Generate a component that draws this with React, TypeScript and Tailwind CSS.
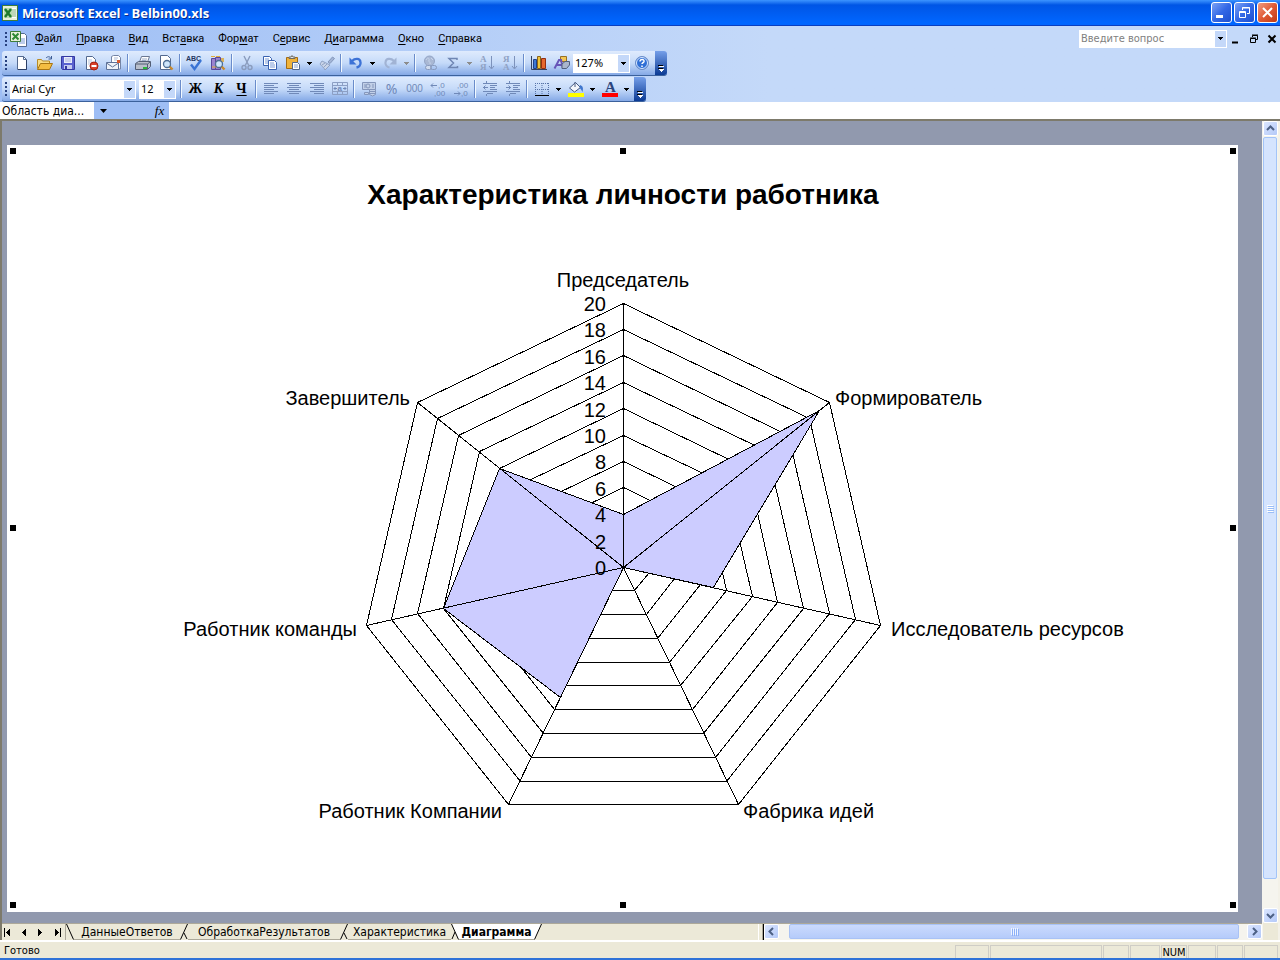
import type { ReactNode } from "react";

const menus = [
  ["", "Ф", "айл"],
  ["", "П", "равка"],
  ["", "В", "ид"],
  ["Вст", "а", "вка"],
  ["Фор", "м", "ат"],
  ["С", "е", "рвис"],
  ["Д", "и", "аграмма"],
  ["", "О", "кно"],
  ["", "С", "правка"],
];

const axes = [
  { name: "Председатель", value: 4, x: 616, y: 142, anchor: "middle" },
  { name: "Формирователь", value: 19, x: 828, y: 260, anchor: "start" },
  { name: "Исследователь ресурсов", value: 7, x: 884, y: 491, anchor: "start" },
  { name: "Фабрика идей", value: 0, x: 736, y: 673, anchor: "start" },
  { name: "Работник Компании", value: 11, x: 495, y: 673, anchor: "end" },
  { name: "Работник команды", value: 14, x: 350, y: 491, anchor: "end" },
  { name: "Завершитель", value: 12, x: 403, y: 260, anchor: "end" },
] as const;

const CX = 616;
const CY = 422;
const RADIUS = 264;
const MAX = 20;
const ticks = [0, 2, 4, 6, 8, 10, 12, 14, 16, 18, 20];

function point(index: number, value: number) {
  const angle = (index * 2 * Math.PI) / axes.length;
  const r = (value / MAX) * RADIUS;
  const x = Math.round(CX + r * Math.sin(angle));
  const y = Math.floor(CY - r * Math.cos(angle));
  return [x + 0.5, y + 0.5];
}

function polygon(values: number[]) {
  return values.map((v, i) => point(i, v).join(",")).join(" ");
}

function RadarChart() {
  const handles = [
    [3, 3], [613, 3], [1223, 3],
    [3, 380], [1223, 380],
    [3, 757], [613, 757], [1223, 757],
  ];

  return (
    <svg viewBox="0 0 1231 767" className="block h-full w-full font-['Liberation_Sans',Arial,sans-serif]">
      <text x="616" y="59" textAnchor="middle" className="text-[28px] font-bold">
        Характеристика личности работника
      </text>
      <g fill="none" stroke="#000" shapeRendering="crispEdges">
        {ticks.slice(1).map((t) => (
          <polygon key={t} points={polygon(axes.map(() => t))} />
        ))}
        <polygon points={polygon(axes.map((a) => a.value))} fill="#ccccff" />
        {axes.map((a, i) => {
          const [x, y] = point(i, MAX);
          return <line key={a.name} x1={CX + 0.5} y1={CY + 0.5} x2={x} y2={y} />;
        })}
      </g>
      <g className="text-[20px]">
        {axes.map((a) => (
          <text key={a.name} x={a.x} y={a.y} textAnchor={a.anchor}>
            {a.name}
          </text>
        ))}
        {ticks.map((t) => (
          <text key={t} x="599" y={Math.round(CY - (t / MAX) * RADIUS) + 8} textAnchor="end">
            {t}
          </text>
        ))}
      </g>
      {handles.map(([x, y]) => (
        <rect key={`${x}-${y}`} x={x} y={y} width="6" height="6" />
      ))}
    </svg>
  );
}

function Icon({ children }: { children: ReactNode }) {
  return (
    <svg viewBox="0 0 16 16" className="h-4 w-4 overflow-visible" fill="none">
      {children}
    </svg>
  );
}

const excelLogo = (
  <>
    <rect x="0.5" y="0.5" width="15" height="15" fill="#e8f0dc" stroke="#3f7d3a" />
    <path d="M9 3h5v10H9z" fill="#fff" />
    <path d="M10 5h4M10 7h4M10 9h4M10 11h4" stroke="#7fae75" />
    <path d="M2 3h8v10H2z" fill="#b9dcae" />
    <path d="M3 4l6 8M9 4l-6 8" stroke="#1f7a2b" strokeWidth="2.4" />
  </>
);

const magnifier = (
  <>
    <path d="M11.5 11.5l3 3" stroke="#c98a2c" strokeWidth="2.4" />
    <circle cx="9" cy="9" r="3.5" fill="#cfe6fb" stroke="#4f6f95" strokeWidth="1.3" />
  </>
);

const page = <path d="M3.5 1.5h6l3 3v10h-9z" fill="#fff" stroke="#53698f" />;

const icons: Record<string, ReactNode> = {
  new: (
    <>
      {page}
      <path d="M9.5 1.5v3h3" stroke="#53698f" />
      <path d="M12.5 5v9.5H4" stroke="#2c3f66" />
    </>
  ),
  open: (
    <>
      <path d="M9 3c2-2 4-1.500 5 0.500M14.500 1v3h-3" stroke="#3c5c94" />
      <path d="M0.5 13.5v-9h4l1 1.500h7v3" fill="#f7dc86" stroke="#b88a25" />
      <path d="M0.500 14.500l3-6h12l-3 6z" fill="#f3bd42" stroke="#a87512" />
    </>
  ),
  save: (
    <>
      <path d="M1.5 1.500h13v13h-12l-1-1z" fill="#5a62cf" stroke="#3438a0" />
      <path d="M4 2h8v6H4z" fill="#e9edfb" />
      <path d="M5 4h6M5 6h6" stroke="#a9b2de" />
      <path d="M4 10h8v4H4z" fill="#c7cdf0" />
      <path d="M5 11h2v3H5z" fill="#3438a0" />
    </>
  ),
  permission: (
    <>
      {page}
      <path d="M5 5h4M5 7h5M5 9h3" stroke="#b5c3dc" />
      <circle cx="11" cy="11" r="4" fill="#d9412b" stroke="#a5200f" />
      <path d="M8.500 11h5" stroke="#fff" strokeWidth="2" />
    </>
  ),
  mail: (
    <>
      <path d="M5.500 7V1.500l2-1h5l2 2V14h-9z" fill="#fff" stroke="#7484a5" />
      <path d="M8 3h4M8 5h3" stroke="#aebbd4" />
      <path d="M0.500 7.500h12v7H0.500z" fill="#eef2f9" stroke="#5e7298" />
      <path d="M0.500 8l6 4 6-4" stroke="#5e7298" />
      <path d="M11 5h3v3h-3z" fill="#d8582e" />
    </>
  ),
  print: (
    <>
      <path d="M4.500 7l2-5.500h8L12.500 7" fill="#fff" stroke="#6b7892" />
      <path d="M7 4h5M6.500 5.500h5" stroke="#9dabc6" />
      <path d="M0.500 8.500l3-2h12v5l-3 3h-12z" fill="#b9bfcb" stroke="#535e75" />
      <path d="M1 9h11.500v5M12.500 9l2.500-2" stroke="#535e75" />
      <path d="M8 12h4v2H8z" fill="#28b73b" />
    </>
  ),
  preview: (
    <>
      <path d="M2.500 0.500h7l3 3v11h-10z" fill="#fff" stroke="#53698f" />
      {magnifier}
    </>
  ),
  spell: (
    <>
      <text x="-1" y="6" className="fill-[#24365f] font-['Liberation_Sans',sans-serif] text-[7px] font-bold">
        ABC
      </text>
      <path d="M4 9.500l3.500 4.500L14 5" stroke="#3973d4" strokeWidth="2.400" />
    </>
  ),
  research: (
    <>
      <path d="M1.500 3.500h4v11h-4zM5.500 2.500h5v12h-5z" fill="#9a83cf" stroke="#59479b" />
      <path d="M1 1.500h4M6 1.500h4M2 12h8" stroke="#e1ab3c" />
      <path d="M11 3h3v4h-3z" fill="#d9b25d" />
      {magnifier}
    </>
  ),
  cut: (
    <>
      <path d="M5 1l4.500 9M11 1L6.500 10" stroke="#8a9cbd" strokeWidth="1.400" />
      <circle cx="5" cy="12.500" r="2" stroke="#8a9cbd" strokeWidth="1.400" />
      <circle cx="11" cy="12.500" r="2" stroke="#8a9cbd" strokeWidth="1.400" />
    </>
  ),
  copy: (
    <>
      <path d="M1.500 1.500h6l2 2v7h-8z" fill="#fff" stroke="#3a62b0" />
      <path d="M3 4h4M3 6h4M3 8h3" stroke="#7b9ad6" />
      <path d="M6.500 5.500h6l2 2v7h-8z" fill="#fff" stroke="#3a62b0" />
      <path d="M8 8h4M8 10h5M8 12h5" stroke="#7b9ad6" />
    </>
  ),
  paste: (
    <>
      <path d="M1.500 2.500h11v11h-11z" fill="#f0b33b" stroke="#a36b14" />
      <path d="M4 3.500V2h2l1-1.500L8 2h2v1.500z" fill="#dfe3ea" stroke="#6e6a5e" />
      <path d="M7.500 7.500h5l2 2v5h-7z" fill="#fff" stroke="#53698f" />
      <path d="M9 10h4M9 12h4" stroke="#8ca2cb" />
    </>
  ),
  brush: (
    <>
      <path d="M9 7l4.500-5 2 1.500-4.500 5z" fill="#a3b5d6" stroke="#8497bb" />
      <path d="M3 6l8 4-5 5c-1-3-3-3-5-6z" fill="#c9d4e8" stroke="#8fa2c4" />
      <path d="M3 10l3-2M5 12l3-3" stroke="#8fa2c4" />
    </>
  ),
  undo: (
    <>
      <path d="M4 6c3-3 8-3 8.500 1 .5 3-1.500 5-4 5.500" stroke="#3d72d6" strokeWidth="2.400" />
      <path d="M1.500 2.500v7h7z" fill="#3d72d6" />
    </>
  ),
  redo: (
    <>
      <path d="M12 6C9 3 4 3 3.500 7 3 10 5 12 7.500 12.500" stroke="#a1b3d4" strokeWidth="2.200" />
      <path d="M14.500 2.500v7h-7z" fill="#a1b3d4" />
    </>
  ),
  link: (
    <>
      <circle cx="7.500" cy="6" r="5" fill="#a9b8d4" stroke="#94a5c6" />
      <path d="M4 5c1-3 4-2 3 0s2 2 1 4M9 3l2 2" stroke="#c7d5ec" />
      <rect x="3.500" y="10.500" width="6" height="4" rx="2" fill="#cfdbef" stroke="#8799bc" />
      <rect x="8.500" y="10.500" width="6" height="4" rx="2" stroke="#8799bc" />
    </>
  ),
  sum: <path d="M12 5V3.500H4L8.500 8 4 12.500h8.500V11" stroke="#6f86b3" strokeWidth="1.500" />,
  chart: (
    <>
      <path d="M0.500 1v13.500H16" stroke="#34425f" />
      <path d="M2.500 4.500h3v9h-3z" fill="#3e78d4" stroke="#20438b" />
      <path d="M6.500 1.500h3v12h-3z" fill="#f0c43b" stroke="#8c6418" />
      <path d="M10.500 3.500h4v10h-4z" fill="#e5682f" stroke="#922f12" />
    </>
  ),
  draw: (
    <>
      <path d="M6.500 1.500h6v5h-6z" fill="#f3c657" stroke="#987124" />
      <path d="M0.500 13.500L5 5l2 0 2 8.500M3 10h5" stroke="#6755b8" strokeWidth="2" />
      <path d="M8 9l3-2.500h4.500V10l-3 3.500H8z" fill="#aab6cc" stroke="#52617e" />
    </>
  ),
  help: (
    <>
      <circle cx="8" cy="8" r="6.500" fill="#2f6fd6" stroke="#6e8fc8" />
      <circle cx="8" cy="8" r="5.500" stroke="#d9e8ff" />
      <path d="M6 6.500c0-3 4.500-2.500 4 0-.3 1-2 1.300-2 2.500M8 10.500V12" stroke="#fff" strokeWidth="1.500" />
    </>
  ),
  alignLeft: <path d="M1 2.500h14M1 4.500h10M1 6.500h14M1 8.500h10M1 10.500h14M1 12.500h10" stroke="#7089b8" />,
  alignCenter: <path d="M1 2.500h14M3 4.500h10M1 6.500h14M3 8.500h10M1 10.500h14M3 12.500h10" stroke="#7089b8" />,
  alignRight: <path d="M1 2.500h14M5 4.500h10M1 6.500h14M5 8.500h10M1 10.500h14M5 12.500h10" stroke="#7089b8" />,
  merge: (
    <>
      <path d="M0.500 1.500h15v12H0.500zM0.500 4.500h15M0.500 10.500h15M5.500 1.500v3M10.500 1.500v3M5.500 10.500v3M10.500 10.500v3" stroke="#8c9fc4" />
      <path d="M2 7.500h3M11 7.500h3M3.500 6L2 7.500 3.500 9M12.500 6L14 7.500 12.500 9" stroke="#7089b8" />
      <text x="5.500" y="10" className="fill-[#7089b8] font-['Liberation_Sans',sans-serif] text-[8px] font-bold">a</text>
    </>
  ),
  currency: (
    <>
      <path d="M1.500 1.500h13v7h-13z" fill="#c2d0e8" stroke="#8496bb" />
      <circle cx="7" cy="5" r="2" stroke="#8496bb" />
      <path d="M12 3v4M4 3v4" stroke="#8496bb" />
      <path d="M8.500 8.500h6v5l-3 1.500-3-1.500zM8.500 10.500h6M8.500 12.500h6" fill="#c2d0e8" stroke="#8496bb" />
      <path d="M3.500 11.500h4v2h-4z" fill="#c2d0e8" stroke="#8496bb" />
    </>
  ),
  outdent: (
    <>
      <path d="M1 2.500h14M8 4.500h7M8 6.500h5M8 8.500h7M1 10.500h14M5 12.500h6" stroke="#7089b8" />
      <path d="M1 6.500h5M3.500 4.500l-2 2 2 2M4.500 13v2M4.500 0v2" stroke="#7089b8" />
    </>
  ),
  indent: (
    <>
      <path d="M1 2.500h14M8 4.500h7M8 6.500h5M8 8.500h7M1 10.500h14M5 12.500h6" stroke="#7089b8" />
      <path d="M1 6.500h5M3.500 4.500l2 2-2 2M4.500 13v2M4.500 0v2" stroke="#7089b8" />
    </>
  ),
  borders: (
    <>
      <path d="M1.500 2v12M8 2v12M14.500 2v12M1 2.500h14M1 8.500h14" stroke="#5874a8" strokeDasharray="1 1" />
      <path d="M1 14.500h14" stroke="#000" />
    </>
  ),
  fill: (
    <>
      <path d="M7.500 1.500l5 5-6 4.500-5-4z" fill="#f3f6fb" stroke="#465a83" />
      <path d="M7 1v5" stroke="#465a83" />
      <path d="M12 4c3 1 3.500 3 2.500 7-1-2-1.500-3-3-4z" fill="#3f76cd" />
      <path d="M0 12h16v4H0z" fill="#ff0" />
    </>
  ),
  fontColor: (
    <>
      <text x="3" y="11" className="fill-[#2c467d] font-['Liberation_Serif',serif] text-[15px] font-bold">А</text>
      <path d="M0 12h16v4H0z" fill="#f00" />
    </>
  ),
};

function SortIcon({ top, bottom }: { top: string; bottom: string }) {
  return (
    <Icon>
      <g className="fill-[#8fa1c3] font-['Liberation_Serif',serif] text-[9px] font-bold">
        <text x="1" y="7">{top}</text>
        <text x="1" y="15">{bottom}</text>
      </g>
      <path d="M12.500 1v12M10 11l2.500 3 2.500-3" stroke="#7d92bb" />
    </Icon>
  );
}

function DecimalIcon({ more }: { more: boolean }) {
  return (
    <Icon>
      <g className="fill-[#7089b8] font-['Liberation_Sans',sans-serif] text-[8px]">
        <text x={more ? 8 : 4} y="7">{more ? ",0" : ",00"}</text>
        <text x={more ? 4 : 8} y="15">{more ? ",00" : ",0"}</text>
      </g>
      {more ? (
        <path d="M1 4.500h6M3 2.500l-2 2 2 2" stroke="#7089b8" />
      ) : (
        <path d="M1 12.500h6M5 10.500l2 2-2 2" stroke="#7089b8" />
      )}
    </Icon>
  );
}

function Tool({ name, label, children }: { name?: string; label: string; children?: ReactNode }) {
  return (
    <button aria-label={label} className="flex h-full w-[23px] shrink-0 items-center justify-center">
      {name ? <Icon>{icons[name]}</Icon> : children}
    </button>
  );
}

function Triangle() {
  return (
    <svg viewBox="0 0 5 3" className="h-[3px] w-[5px]" shapeRendering="crispEdges" fill="currentColor">
      <path d="M0 0h5v1H0zM1 1h3v1H1zM2 2h1v1H2z" />
    </svg>
  );
}

function Drop({ label, muted }: { label: string; muted?: boolean }) {
  return (
    <button
      aria-label={label}
      className={`flex h-full w-[11px] shrink-0 items-center justify-center ${muted ? "text-[#8d8d8d]" : "text-black"}`}
    >
      <Triangle />
    </button>
  );
}

function Sep() {
  return (
    <div className="flex w-[6px] shrink-0 justify-center">
      <div className="h-[18px] w-px bg-[#6a8ccb]" />
      <div className="h-[18px] w-px bg-[#f1f9ff]" />
    </div>
  );
}

function Grip() {
  return (
    <div className="flex w-[8px] shrink-0 flex-col items-center gap-[2px]">
      {[0, 1, 2, 3].map((n) => (
        <div key={n} className="h-[2px] w-[2px] bg-[#27417f]" />
      ))}
    </div>
  );
}

function Combo({ label, value, width }: { label: string; value: string; width: string }) {
  return (
    <div className={`relative h-[19px] shrink-0 bg-white ${width}`}>
      <select aria-label={label} defaultValue={value} className="h-full w-full appearance-none pl-[2px] outline-none">
        <option>{value}</option>
      </select>
      <span className="pointer-events-none absolute inset-y-px right-px flex w-[11px] items-center justify-center bg-[#c4d8f9]">
        <Triangle />
      </span>
    </div>
  );
}

function ToolbarEnd() {
  return (
    <button
      aria-label="Параметры панелей инструментов"
      className="ml-[2px] flex h-full w-[12px] shrink-0 items-end justify-center rounded-r-[3px] bg-linear-to-b from-[#759fe9] to-[#0a3a94] pb-[3px]"
    >
      <svg viewBox="0 0 7 7" className="h-[7px] w-[7px]" shapeRendering="crispEdges">
        <path d="M1 1h5v1H1zM1 4h5v1H1zM2 5h3v1H2zM3 6h1v1H3z" fill="#fff" />
        <path d="M0 0h5v1H0zM0 3h5v1H0z" fill="#000" />
      </svg>
    </button>
  );
}

function Toolbar({ label, children }: { label: string; children: ReactNode }) {
  return (
    <div
      role="toolbar"
      aria-label={label}
      className="ml-[2px] flex h-[25px] w-fit items-center rounded-[3px] border-b border-[#3b619c] bg-linear-to-b from-[#dfebfd] via-[#c5daf9] to-[#85a9e6] font-['Noto_Sans',sans-serif]"
    >
      {children}
      <ToolbarEnd />
    </div>
  );
}

function TitleButton({ label, close, children }: { label: string; close?: boolean; children: ReactNode }) {
  return (
    <button
      aria-label={label}
      className={`flex h-[21px] w-[21px] items-center justify-center rounded-[3px] border border-white bg-linear-to-br ${
        close ? "from-[#ee9a80] via-[#e05a35] to-[#c03a12]" : "from-[#7ba0f4] via-[#3468e6] to-[#1d4fcf]"
      }`}
    >
      <svg viewBox="0 0 15 15" className="h-[15px] w-[15px]" fill="none" stroke="#fff">
        {children}
      </svg>
    </button>
  );
}

function ScrollButton({ label, d }: { label: string; d: string }) {
  return (
    <button
      aria-label={label}
      className="flex h-[15px] w-[15px] shrink-0 items-center justify-center rounded-[2px] border border-white bg-linear-to-br from-[#dbe6ff] to-[#b4c9f8]"
    >
      <svg viewBox="0 0 9 9" className="h-[9px] w-[9px]" fill="none" stroke="#4d6185" strokeWidth="2">
        <path d={d} />
      </svg>
    </button>
  );
}

function Slant({ kind }: { kind: "first" | "back" | "active" | "last" }) {
  return (
    <svg viewBox="0 0 8 16" className="h-4 w-2 shrink-0" fill="none" stroke="#000">
      {kind === "first" && <path d="M0.500 0L7.500 15.500" />}
      {kind === "back" && <path d="M7.500 0L0.500 15.500M4 9l3 6" />}
      {kind === "active" && (
        <>
          <path d="M0.500 0H8v16z" fill="#fff" stroke="none" />
          <path d="M0.500 0L7.500 15.500M4 8L1 15" />
        </>
      )}
      {kind === "last" && (
        <>
          <path d="M0 0h7.500L0.500 16H0z" fill="#fff" stroke="none" />
          <path d="M7.500 0L0.500 15.500" />
        </>
      )}
    </svg>
  );
}

function Tab({ name, width, active }: { name: string; width: string; active?: boolean }) {
  return (
    <button
      role="tab"
      aria-selected={!!active}
      className={`h-4 shrink-0 border-b border-[#aca899] text-center text-[12px] leading-[16px] whitespace-nowrap ${width} ${
        active ? "bg-white font-bold" : ""
      }`}
    >
      {name}
    </button>
  );
}

const sheetNav = [
  { label: "Первый лист", d: "M1 0h1v9H1zM7 0v9L3 4.500z" },
  { label: "Предыдущий лист", d: "M6 0v9L2 4.500z" },
  { label: "Следующий лист", d: "M2 0v9l4-4.500z" },
  { label: "Последний лист", d: "M7 0h1v9H7zM2 0v9l4-4.500z" },
];

const statusCells = [
  { text: "", width: "w-[34px]" },
  { text: "", width: "w-[112px]" },
  { text: "", width: "w-[26px]" },
  { text: "", width: "w-[30px]" },
  { text: "NUM", width: "w-[26px]" },
  { text: "", width: "w-[28px]" },
  { text: "", width: "w-[26px]" },
  { text: "", width: "w-[34px]" },
];

export default function App() {
  return (
    <div className="flex h-screen flex-col overflow-hidden bg-[#ece9d8] font-['DejaVu_Sans_Condensed','Noto_Sans',sans-serif] text-[11px] leading-[14px] text-black">
      <header className="flex h-[26px] shrink-0 items-center border-b border-[#0a3fc0] bg-linear-to-b from-[#3c94ff] from-0% via-[#0055e5] via-20% to-[#0066ff] to-90% px-[2px]">
        <Icon>{excelLogo}</Icon>
        <h1 className="ml-1 flex-1 font-['Open_Sans','Noto_Sans',sans-serif] text-[13px] font-bold text-white [text-shadow:1px_1px_#0a2a8a]">
          Microsoft Excel - Belbin00.xls
        </h1>
        <div className="flex gap-[2px]">
          <TitleButton label="Свернуть">
            <path d="M2 11.500h7" strokeWidth="3" />
          </TitleButton>
          <TitleButton label="Восстановить">
            <path d="M5.500 5V2.500h7v6H10M5 3h8" />
            <path d="M2.500 6.500h6v6h-6zM2 7.500h7" />
          </TitleButton>
          <TitleButton label="Закрыть" close>
            <path d="M3 3l9 9M12 3l-9 9" strokeWidth="2" />
          </TitleButton>
        </div>
      </header>

      <div className="shrink-0 bg-linear-to-r from-[#9ebef5] to-[#c4d9f9] to-60%">
        <div className="flex h-[25px] items-center pl-[2px]">
          <Grip />
          <svg viewBox="0 0 18 16" className="h-4 w-[18px] shrink-0" fill="none">
            <path d="M7.500 2.500h7l2 2v11h-9z" fill="#fff" stroke="#53698f" />
            <path d="M9 8h6M9 10h6M9 12h6" stroke="#7b9ad6" />
            <path d="M0.500 0.500h10v10H0.500z" fill="#e8f0dc" stroke="#3f7d3a" />
            <path d="M2.500 2.500l6 6M8.500 2.500l-6 6" stroke="#2f8a35" strokeWidth="2" />
          </svg>
          <nav className="flex flex-1 font-['Roboto','Noto_Sans',sans-serif]">
            {menus.map(([before, key, after]) => (
              <button key={before + key + after} className="px-[7px]">
                {before}
                <span className="underline underline-offset-2">{key}</span>
                {after}
              </button>
            ))}
          </nav>
          <div className="relative h-[18px] w-[148px] bg-white">
            <input
              aria-label="Введите вопрос"
              placeholder="Введите вопрос"
              className="h-full w-full pl-[2px] outline-none placeholder:text-[#808080]"
            />
            <span className="pointer-events-none absolute inset-y-px right-px flex w-[11px] items-center justify-center bg-[#c4d8f9]">
              <Triangle />
            </span>
          </div>
          <div className="flex pr-[3px]">
            {[
              { label: "Свернуть окно", d: "M1 8.500h6", w: 2 },
              { label: "Восстановить окно", d: "M3.500 3V1.500h5v4H7M3 1h6M1.500 4.500h5v4h-5zM1 4h6", w: 1 },
              { label: "Закрыть окно", d: "M1.500 1.500l7 7M8.500 1.500l-7 7", w: 2 },
            ].map((b, i) => (
              <button key={b.label} aria-label={b.label} className={i === 0 ? "w-[14px]" : "w-[18px]"}>
                <svg viewBox="0 0 10 10" className="ml-auto h-[10px] w-[10px]" fill="none" stroke="#000" strokeWidth={b.w}>
                  <path d={b.d} />
                </svg>
              </button>
            ))}
          </div>
        </div>

        <Toolbar label="Стандартная">
          <Grip />
          <Tool name="new" label="Создать" />
          <Tool name="open" label="Открыть" />
          <Tool name="save" label="Сохранить" />
          <Tool name="permission" label="Разрешения" />
          <Tool name="mail" label="Сообщение" />
          <Sep />
          <Tool name="print" label="Печать" />
          <Tool name="preview" label="Предварительный просмотр" />
          <Sep />
          <Tool name="spell" label="Орфография" />
          <Tool name="research" label="Справочные материалы" />
          <Sep />
          <Tool name="cut" label="Вырезать" />
          <Tool name="copy" label="Копировать" />
          <Tool name="paste" label="Вставить" />
          <Drop label="Параметры вставки" />
          <Tool name="brush" label="Формат по образцу" />
          <Sep />
          <Tool name="undo" label="Отменить" />
          <Drop label="Список отмены" />
          <Tool name="redo" label="Вернуть" />
          <Drop label="Список возврата" muted />
          <Sep />
          <Tool name="link" label="Гиперссылка" />
          <Tool name="sum" label="Автосумма" />
          <Drop label="Функции" muted />
          <Tool label="Сортировка по возрастанию">
            <SortIcon top="А" bottom="Я" />
          </Tool>
          <Tool label="Сортировка по убыванию">
            <SortIcon top="Я" bottom="А" />
          </Tool>
          <Sep />
          <Tool name="chart" label="Мастер диаграмм" />
          <Tool name="draw" label="Рисование" />
          <Combo label="Масштаб" value="127%" width="w-[57px]" />
          <Tool name="help" label="Справка" />
        </Toolbar>

        <div className="pt-px">
          <Toolbar label="Форматирование">
            <Grip />
            <Combo label="Шрифт" value="Arial Cyr" width="w-[126px]" />
            <div className="mr-[2px] ml-[3px]">
              <Combo label="Размер" value="12" width="w-[37px]" />
            </div>
            <Sep />
            <Tool label="Полужирный">
              <span className="font-['Liberation_Serif',serif] text-[14px] font-bold">Ж</span>
            </Tool>
            <Tool label="Курсив">
              <span className="font-['Liberation_Serif',serif] text-[14px] font-bold italic">К</span>
            </Tool>
            <Tool label="Подчеркнутый">
              <span className="font-['Liberation_Serif',serif] text-[14px] font-bold underline underline-offset-2">Ч</span>
            </Tool>
            <Sep />
            <Tool name="alignLeft" label="По левому краю" />
            <Tool name="alignCenter" label="По центру" />
            <Tool name="alignRight" label="По правому краю" />
            <Tool name="merge" label="Объединить ячейки" />
            <Sep />
            <Tool name="currency" label="Денежный формат" />
            <Tool label="Процентный формат">
              <span className="text-[14px] text-[#7089b8]">%</span>
            </Tool>
            <Tool label="Формат с разделителями">
              <span className="font-['Liberation_Sans',sans-serif] text-[10px] text-[#7089b8]">000</span>
            </Tool>
            <Tool label="Увеличить разрядность">
              <DecimalIcon more />
            </Tool>
            <Tool label="Уменьшить разрядность">
              <DecimalIcon more={false} />
            </Tool>
            <Sep />
            <Tool name="outdent" label="Уменьшить отступ" />
            <Tool name="indent" label="Увеличить отступ" />
            <Sep />
            <Tool name="borders" label="Границы" />
            <Drop label="Виды границ" />
            <Tool name="fill" label="Цвет заливки" />
            <Drop label="Палитра заливки" />
            <Tool name="fontColor" label="Цвет шрифта" />
            <Drop label="Палитра шрифта" />
          </Toolbar>
        </div>
      </div>

      <div className="flex h-[17px] shrink-0 bg-[#9ebef5]">
        <input aria-label="Имя" defaultValue="Область диа..." className="w-[94px] bg-white pl-[2px] text-[12px] outline-none" />
        <button aria-label="Список имен" className="flex w-[18px] items-center justify-center">
          <svg viewBox="0 0 7 4" className="h-1 w-[7px]">
            <path d="M0 0h7L3.500 4z" />
          </svg>
        </button>
        <button
          aria-label="Вставка функции"
          className="ml-[34px] w-[23px] pl-1 text-center font-['Liberation_Serif',serif] text-[13px] italic"
        >
          fx
        </button>
        <input aria-label="Строка формул" className="min-w-0 flex-1 bg-white outline-none" />
      </div>

      <main className="flex min-h-0 flex-1 border-t-2 border-l-2 border-[#7d7a6b]">
        <div className="flex min-w-0 flex-1 flex-col">
          <div className="min-h-0 flex-1 bg-[#9199ae] pt-6 pr-6 pb-[11px] pl-[5px]">
            <div className="h-full bg-white">
              <RadarChart />
            </div>
          </div>

          <div className="flex h-[17px] shrink-0 border-t border-[#aca899]">
            <div className="flex w-[64px] shrink-0 items-center justify-between border-r border-[#aca899] pr-[3px] pl-px">
              {sheetNav.map((n) => (
                <button key={n.label} aria-label={n.label}>
                  <svg viewBox="0 0 9 9" className="h-[9px] w-[9px]" shapeRendering="crispEdges">
                    <path d={n.d} />
                  </svg>
                </button>
              ))}
            </div>
            <div role="tablist" className="flex flex-1">
              <Slant kind="first" />
              <Tab name="ДанныеОтветов" width="w-[106px]" />
              <Slant kind="back" />
              <Tab name="ОбработкаРезультатов" width="w-[152px]" />
              <Slant kind="back" />
              <Tab name="Характеристика" width="w-[103px]" />
              <Slant kind="active" />
              <Tab name="Диаграмма" width="w-[75px]" active />
              <Slant kind="last" />
            </div>
            <div className="flex w-[40%] shrink-0 bg-[#f5f4ee]">
              <div className="w-[5px] border-x border-white border-r-[#aca899] bg-[#ece9d8]" />
              <div className="w-px bg-black" />
              <ScrollButton label="Влево" d="M6 1L2.500 4.500 6 8" />
              <div className="flex flex-1 pr-2 pl-[10px]">
                <div className="flex h-[15px] flex-1 items-center justify-center gap-px rounded-[2px] border border-[#a9c2f5] bg-linear-to-b from-[#cbdafd] to-[#b5cbfa]">
                  {[0, 1, 2, 3].map((n) => (
                    <div key={n} className="h-[7px] w-px bg-[#eef4ff] shadow-[1px_1px_#8cb0f8]" />
                  ))}
                </div>
              </div>
              <ScrollButton label="Вправо" d="M3 1l3.500 3.500L3 8" />
            </div>
          </div>
        </div>

        <div className="flex w-[18px] shrink-0 flex-col border-r-2 border-[#f3f1e8] bg-[#f5f4ee] pl-px">
          <ScrollButton label="Вверх" d="M1 6l3.500-3.500L8 6" />
          <div className="flex flex-1 flex-col pt-px pb-[29px]">
            <div className="flex w-[14px] flex-1 flex-col items-center justify-center gap-px rounded-[2px] border border-[#a3c4f8] bg-[#d5e4fe]">
              {[0, 1, 2, 3].map((n) => (
                <div key={n} className="h-px w-[6px] bg-white shadow-[1px_1px_#9abdf7]" />
              ))}
            </div>
          </div>
          <ScrollButton label="Вниз" d="M1 3l3.500 3.500L8 3" />
          <div className="h-[17px] bg-[#ece9d8]" />
        </div>
      </main>

      <footer className="flex h-[20px] shrink-0 items-center border-t-2 border-b-2 border-t-white border-b-[#2f72d8]">
        <div className="flex-1 pt-[2px] pl-1">Готово</div>
        <div className="flex gap-px self-end pr-[2px]">
          {statusCells.map((c, i) => (
            <div key={i} className={`h-[13px] border border-b-0 border-[#cfcdc6] text-center leading-[13px] ${c.width}`}>
              {c.text}
            </div>
          ))}
        </div>
      </footer>
    </div>
  );
}
